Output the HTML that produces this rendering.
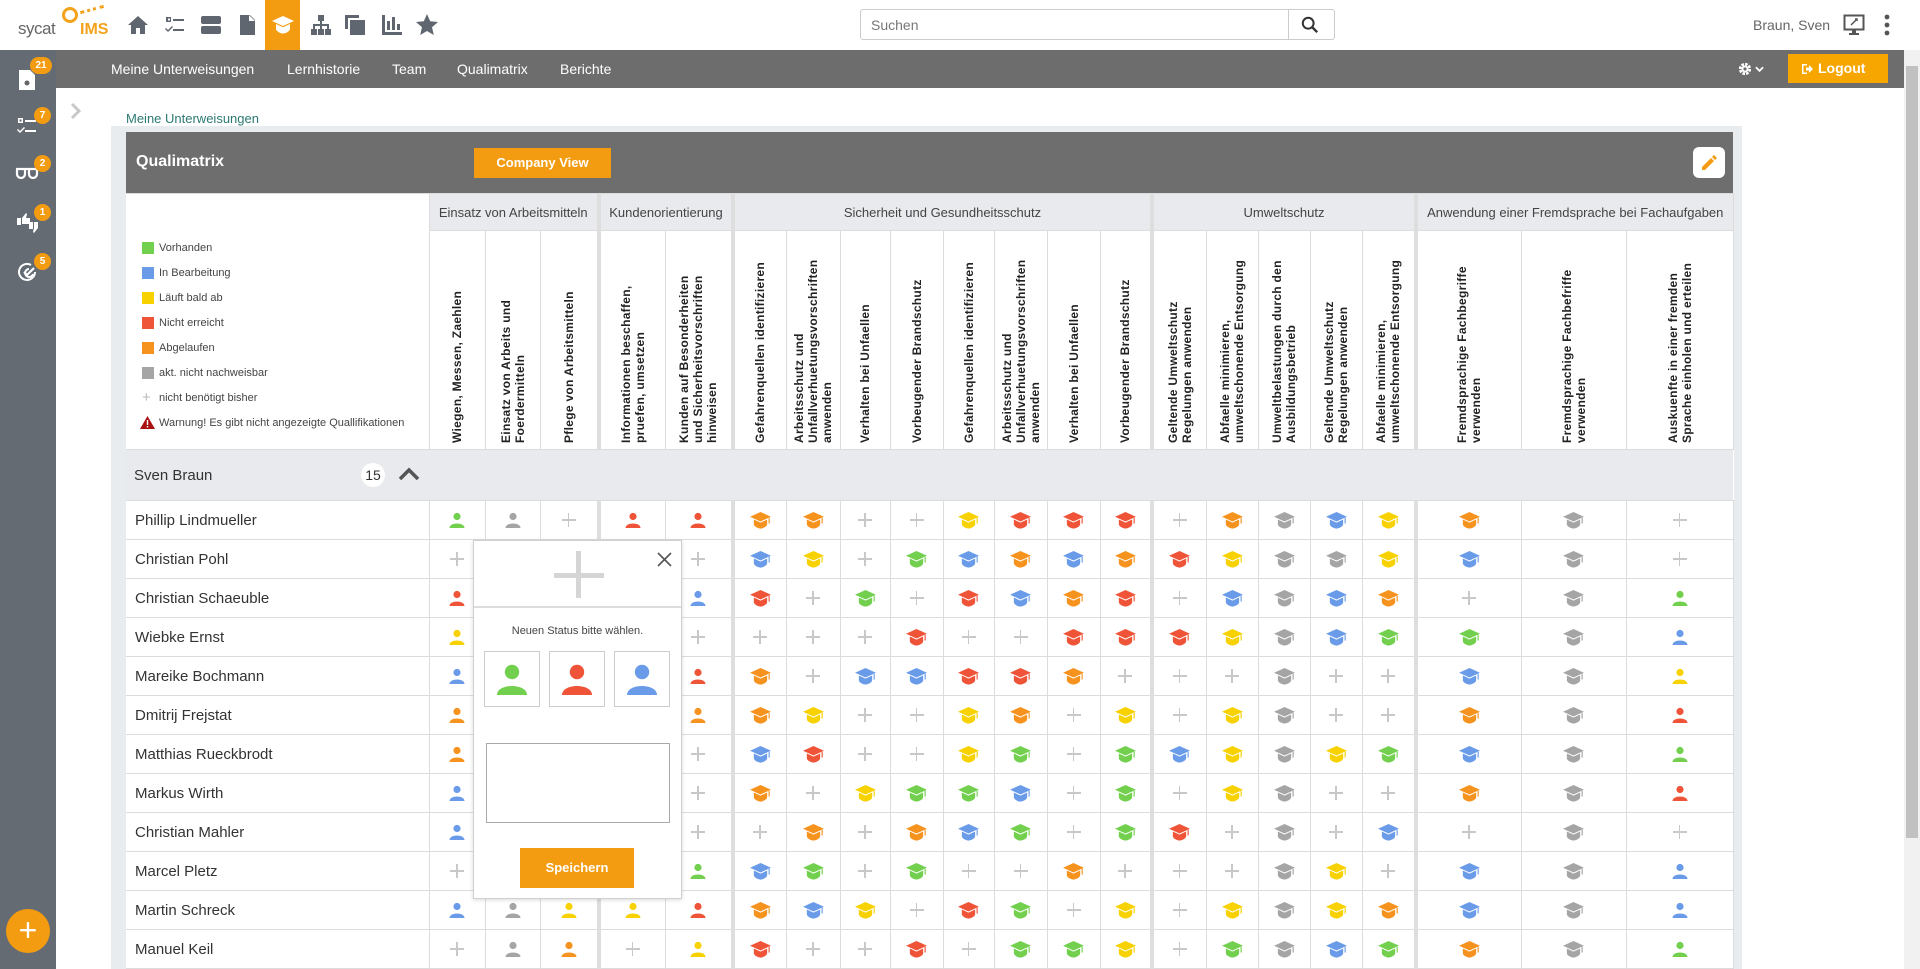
<!DOCTYPE html>
<html><head><meta charset="utf-8">
<style>
*{box-sizing:border-box;margin:0;padding:0}
body{width:1920px;height:969px;overflow:hidden;background:#fff;font-family:"Liberation Sans",sans-serif;position:relative;color:#333}
.top{position:absolute;left:0;top:0;width:1920px;height:50px;background:#fff}
.ti{position:absolute;top:13px;width:24px;height:24px;fill:#5f6670}
.act{position:absolute;left:265px;top:0;width:35px;height:50px;background:#f39c12}
.search{position:absolute;left:860px;top:9px;width:475px;height:31px;border:1px solid #ccc;border-radius:3px;font-size:14px;color:#777;padding:7px 10px}
.search i{position:absolute;left:427px;top:0;width:1px;height:29px;background:#ccc}
.nav{position:absolute;left:0;top:50px;width:1904px;height:38px;background:#6d6d6d}
.nav span{position:absolute;top:11px;color:#fff;font-size:14px}
.side{position:absolute;left:0;top:50px;width:56px;height:919px;background:#646b73}
.badge{position:absolute;background:#f39c12;color:#fff;font-size:10px;border-radius:9px;min-width:17px;height:17px;text-align:center;line-height:17px;font-weight:bold}
.logout{position:absolute;left:1788px;top:54px;width:100px;height:29px;background:#f7a600;color:#fff;font-weight:bold;font-size:14px;padding:6px 0 0 30px}
.scroll{position:absolute;left:1904px;top:50px;width:16px;height:919px;background:#f1f1f1}
.scroll i{position:absolute;left:2px;top:16px;width:12px;height:772px;background:#c1c1c1}
.panel{position:absolute;left:111px;top:126px;width:1631px;height:843px;background:#e9ecef}
.hbar{position:absolute;left:126px;top:132px;width:1607px;height:61px;background:#6e6e6e}
.hbar b{position:absolute;left:10px;top:21px;color:#fff;font-size:16px}
.cv{position:absolute;left:348px;top:16px;width:137px;height:30px;background:#f39c12;color:#fff;font-weight:bold;font-size:13px;text-align:center;line-height:30px}
.ed{position:absolute;left:1567px;top:15px;width:32px;height:31px;background:#fff;border-radius:6px}
table{position:absolute;left:126px;top:193px;border-collapse:collapse;table-layout:fixed;background:#fff}
td,th{border:1px solid #dcdcdc;text-align:center;vertical-align:middle;padding:0}
.g th{height:37px;background:#e8eaed;font-weight:normal;font-size:13px;color:#444}
.rh td{height:219px;vertical-align:bottom}
.rh td div{writing-mode:vertical-rl;transform:rotate(180deg);font-size:12px;font-weight:bold;line-height:14px;height:185px;text-align:left;margin:0 auto 6px;color:#222;letter-spacing:.3px}
.T{border-right:4px solid #dedede}
.sv td{height:51px;background:#e8eaed;border-left:none;border-right:none}
tr.d td{height:39px}
td.n{text-align:left;padding-left:9px;font-size:15px;color:#333;border-left:none}
td.p{position:relative}
td.p::before{content:"";position:absolute;left:50%;top:50%;width:14px;height:1.5px;margin:-1px 0 0 -7px;background:#c8c8c8}
td.p::after{content:"";position:absolute;left:50%;top:50%;width:1.5px;height:14px;margin:-7px 0 0 -1px;background:#c8c8c8}
svg.c{width:23px;height:19px;display:block;margin:0 auto}
svg.u{width:16px;height:16px;display:block;margin:0 auto}
.g1{fill:#72d04e}.b{fill:#6a9be9}.y{fill:#f7d100}.r{fill:#ef5438}.o{fill:#f6921e}.s{fill:#a5a5a5}
.leg{position:absolute;font-size:11px;color:#444}
.leg i{position:absolute;left:-17px;top:0;width:12px;height:12px}
.pop{position:absolute;left:473px;top:540px;width:209px;height:359px;background:#fff;border:1px solid #d0d0d0;box-shadow:0 1px 4px rgba(0,0,0,.15)}
.pop .hd{height:67px;border-bottom:2px solid #ddd;position:relative}
.box{position:absolute;top:110px;width:56px;height:56px;border:1px solid #ccc}
.box svg{width:32px;height:32px;margin:11px auto 0;display:block}
</style></head><body>
<svg width="0" height="0" style="position:absolute">
<defs>
<symbol id="c" viewBox="0 0 24 20"><path d="M12 1L23 6 12 11 1 6Z"/><path d="M5 9v5c0 2 4 4.5 7 4.5s7-2.5 7-4.5V9l-7 3.3z"/><path d="M20.5 7.2h1.2v6h-1.2z"/></symbol>
<symbol id="u" viewBox="0 0 16 16"><circle cx="8" cy="4.5" r="3.6"/><path d="M0.5 16C0.5 10 15.5 10 15.5 16Z"/></symbol>
</defs></svg>

<div class="top">
 <div style="position:absolute;left:18px;top:19px;font-size:17px;color:#666;letter-spacing:-.5px">sycat</div>
 <div style="position:absolute;left:62px;top:7px;width:16px;height:16px;border:3px solid #f3a21c;border-radius:50%"></div>
 <div style="position:absolute;left:80px;top:8px;width:24px;height:3px;border-top:3px dotted #f3a21c;transform:rotate(-15deg)"></div>
 <div style="position:absolute;left:80px;top:21px;font-size:16px;font-weight:bold;color:#f3a21c">IMS</div>
 <svg class="ti" style="left:126px" viewBox="0 0 24 24"><path d="M12 3L2 12h3v9h5v-6h4v6h5v-9h3z"/></svg>
 <svg class="ti" style="left:163px" viewBox="0 0 24 24"><path d="M3 4h5v5H3zm2 1.5v2h2v-2zM10 6h11v2H10zM3 15l2 2 4-4 1 1-5 5-3-3zm7 1h11v2H10z"/></svg>
 <svg class="ti" style="left:199px" viewBox="0 0 24 24"><rect x="2" y="3" width="20" height="8" rx="2"/><rect x="2" y="13" width="20" height="8" rx="2"/></svg>
 <svg class="ti" style="left:235px" viewBox="0 0 24 24"><path d="M5 2h10l5 5v15H5zM14 2v6h6"/></svg>
 <div class="act"></div>
 <svg class="ti" style="left:271px;fill:#fff" viewBox="0 0 24 20"><path d="M12 1L23 6 12 11 1 6Z"/><path d="M5 9v5c0 2 4 4.5 7 4.5s7-2.5 7-4.5V9l-7 3.3z"/></svg>
 <svg class="ti" style="left:309px" viewBox="0 0 24 24"><path d="M9 2h6v6h-2v3h7v5h2v6h-6v-6h2v-3h-5v3h2v6H9v-6h2v-3H6v3h2v6H2v-6h2v-5h7V8H9z"/></svg>
 <svg class="ti" style="left:343px" viewBox="0 0 24 24"><path d="M2 2h14v3H5v11H2zM7 7h15v15H7z"/></svg>
 <svg class="ti" style="left:380px" viewBox="0 0 24 24"><path d="M2 2h3v17h17v3H2zM7 8h3v9H7zm5-4h3v13h-3zm5 7h3v6h-3z"/></svg>
 <svg class="ti" style="left:415px" viewBox="0 0 24 24"><path d="M12 1l3.2 7.3 7.8.7-6 5.3 1.8 7.7L12 18l-6.8 4 1.8-7.7-6-5.3 7.8-.7z"/></svg>
 <div class="search">Suchen<i></i>
  <svg style="position:absolute;left:440px;top:6px;width:18px;height:18px" viewBox="0 0 20 20"><circle cx="8" cy="8" r="6" fill="none" stroke="#333" stroke-width="2.2"/><path d="M12.5 12.5L18 18" stroke="#333" stroke-width="2.6"/></svg></div>
 <div style="position:absolute;left:1753px;top:17px;font-size:14px;color:#666">Braun, Sven</div>
 <svg style="position:absolute;left:1843px;top:14px;width:22px;height:22px" viewBox="0 0 22 22"><rect x="1.5" y="1.5" width="19" height="14" fill="none" stroke="#555" stroke-width="2"/><path d="M9 16h4v3h3v2H6v-2h3z" fill="#555"/><path d="M8 11l5-5M12 5h2v2" stroke="#555" stroke-width="1.5" fill="none"/></svg>
 <svg style="position:absolute;left:1884px;top:14px;width:6px;height:22px" viewBox="0 0 6 22"><circle cx="3" cy="3" r="2.4" fill="#555"/><circle cx="3" cy="11" r="2.4" fill="#555"/><circle cx="3" cy="19" r="2.4" fill="#555"/></svg>
</div>

<div class="nav">
 <span style="left:111px">Meine Unterweisungen</span>
 <span style="left:287px">Lernhistorie</span>
 <span style="left:392px">Team</span>
 <span style="left:457px">Qualimatrix</span>
 <span style="left:560px">Berichte</span>
 <svg style="position:absolute;left:1738px;top:12px;width:14px;height:14px" viewBox="0 0 16 16"><circle cx="8" cy="8" r="5.5" fill="none" stroke="#fff" stroke-width="3" stroke-dasharray="3 1.3"/><circle cx="8" cy="8" r="4" fill="#fff"/><circle cx="8" cy="8" r="1.8" fill="#6d6d6d"/></svg>
 <svg style="position:absolute;left:1755px;top:15px;width:9px;height:8px" viewBox="0 0 10 8"><path d="M1 2l4 4 4-4" stroke="#fff" stroke-width="2" fill="none"/></svg>
</div>
<div class="logout"><svg style="position:absolute;left:13px;top:9px;width:12px;height:12px" viewBox="0 0 12 12"><path d="M1 1h5v1.5H2.5v7H6V11H1z" fill="#fff"/><path d="M5 4.5h3V2l4 4-4 4V7.5H5z" fill="#fff"/></svg>Logout</div>
<div class="scroll"><i></i></div>

<div class="side">
 <svg style="position:absolute;left:19px;top:20px;width:16px;height:20px" viewBox="0 0 16 20"><path d="M0 0h11l5 5v15H0z" fill="#fff"/><circle cx="8" cy="13" r="2.5" fill="#666"/></svg>
 <div class="badge" style="left:30px;top:7px;width:22px">21</div>
 <svg style="position:absolute;left:17px;top:67px;width:22px;height:18px" viewBox="0 0 22 18"><path d="M1 1h5v5H1zm1.5 1.5v2h2v-2zM8 3h11v2H8zM1 12l2 2 4-4 1 1-5 5-3-3zm7 1h11v2H8z" fill="#fff"/></svg>
 <div class="badge" style="left:34px;top:57px">7</div>
 <svg style="position:absolute;left:15px;top:117px;width:24px;height:12px" viewBox="0 0 24 12"><path d="M1 2h22M2 2v5a4 4 0 008 0V3m4 0v4a4 4 0 008 0V2" stroke="#fff" stroke-width="2.2" fill="none"/></svg>
 <div class="badge" style="left:34px;top:105px">2</div>
 <svg style="position:absolute;left:16px;top:162px;width:24px;height:22px" viewBox="0 0 24 22"><path d="M1 6h4v7H1zM6 6l4-5 1 1-1 4h4v6H6zM13 10h4v7h-4zM18 10h4v6l-4 5-1-1 1-4z" fill="#fff"/></svg>
 <div class="badge" style="left:34px;top:154px">1</div>
 <svg style="position:absolute;left:17px;top:212px;width:22px;height:20px" viewBox="0 0 22 20"><path d="M14 3A8 8 0 1018 10" stroke="#fff" stroke-width="2" fill="none"/><path d="M12 7a4 4 0 104 5" stroke="#fff" stroke-width="2" fill="none"/><path d="M7 10l3 3 7-7" stroke="#fff" stroke-width="2.2" fill="none"/></svg>
 <div class="badge" style="left:34px;top:203px">5</div>
 <div style="position:absolute;left:6px;top:859px;width:44px;height:44px;border-radius:50%;background:#f39c12;color:#fff;font-size:32px;text-align:center;line-height:42px">+</div>
</div>

<svg style="position:absolute;left:70px;top:102px;width:12px;height:18px" viewBox="0 0 12 18"><path d="M2 2l7 7-7 7" stroke="#c8c8c8" stroke-width="3" fill="none"/></svg>
<div style="position:absolute;left:126px;top:111px;font-size:13px;color:#2c7a72">Meine Unterweisungen</div>

<div class="panel"></div>
<div class="hbar"><b>Qualimatrix</b><div class="cv">Company View</div>
 <div class="ed"><svg style="width:18px;height:18px;margin:7px" viewBox="0 0 18 18"><path d="M2 13l9-9 3 3-9 9H2zM12 3l2-2 3 3-2 2z" fill="#f39c12"/></svg></div></div>

<table>
<colgroup><col style="width:303px"><col style="width:56px"><col style="width:55px"><col style="width:59px"><col style="width:66px"><col style="width:68px"><col style="width:53px"><col style="width:54px"><col style="width:50px"><col style="width:53px"><col style="width:51px"><col style="width:53px"><col style="width:53px"><col style="width:52px"><col style="width:54px"><col style="width:52px"><col style="width:52px"><col style="width:52px"><col style="width:54px"><col style="width:105px"><col style="width:105px"><col style="width:107px"></colgroup>
<tr class="g"><th rowspan="2" style="background:#fff;border-left:none;border-bottom:none"></th><th colspan="3" class="T">Einsatz von Arbeitsmitteln</th><th colspan="2" class="T">Kundenorientierung</th><th colspan="8" class="T">Sicherheit und Gesundheitsschutz</th><th colspan="5" class="T">Umweltschutz</th><th colspan="3">Anwendung einer Fremdsprache bei Fachaufgaben</th></tr>
<tr class="rh">
<td><div>Wiegen, Messen, Zaehlen</div></td>
<td><div>Einsatz von Arbeits und Foerdermitteln</div></td>
<td class="T"><div>Pflege von Arbeitsmitteln</div></td>
<td><div>Informationen beschaffen, pruefen, umsetzen</div></td>
<td class="T"><div>Kunden auf Besonderheiten und Sicherheitsvorschriften hinweisen</div></td>
<td><div>Gefahrenquellen identifizieren</div></td>
<td><div>Arbeitsschutz und Unfallverhuetungsvorschriften anwenden</div></td>
<td><div>Verhalten bei Unfaellen</div></td>
<td><div>Vorbeugender Brandschutz</div></td>
<td><div>Gefahrenquellen identifizieren</div></td>
<td><div>Arbeitsschutz und Unfallverhuetungsvorschriften anwenden</div></td>
<td><div>Verhalten bei Unfaellen</div></td>
<td class="T"><div>Vorbeugender Brandschutz</div></td>
<td><div>Geltende Umweltschutz Regelungen anwenden</div></td>
<td><div>Abfaelle minimieren, umweltschonende Entsorgung</div></td>
<td><div>Umweltbelastungen durch den Ausbildungsbetrieb</div></td>
<td><div>Geltende Umweltschutz Regelungen anwenden</div></td>
<td class="T"><div>Abfaelle minimieren, umweltschonende Entsorgung</div></td>
<td><div>Fremdsprachige Fachbegriffe verwenden</div></td>
<td><div>Fremdsprachige Fachbefriffe verwenden</div></td>
<td><div>Auskuenfte in einer fremden Sprache einholen und erteilen</div></td>
</tr>
<tr class="sv"><td style="text-align:left;padding-left:8px;font-size:15px;position:relative">Sven Braun<span style="position:absolute;left:235px;top:13px;width:24px;height:24px;border-radius:50%;background:#fff;font-size:14px;text-align:center;line-height:24px">15</span><svg style="position:absolute;left:272px;top:17px;width:22px;height:14px" viewBox="0 0 22 14"><path d="M2 12L11 3l9 9" stroke="#555" stroke-width="3.5" fill="none"/></svg></td><td colspan="21"></td></tr>
</table>

<div class="leg" style="left:159px;top:242px"><i style="background:#72d04e"></i>Vorhanden</div>
<div class="leg" style="left:159px;top:267px"><i style="background:#6a9be9"></i>In Bearbeitung</div>
<div class="leg" style="left:159px;top:292px"><i style="background:#f7d100"></i>Läuft bald ab</div>
<div class="leg" style="left:159px;top:317px"><i style="background:#ef5438"></i>Nicht erreicht</div>
<div class="leg" style="left:159px;top:342px"><i style="background:#f6921e"></i>Abgelaufen</div>
<div class="leg" style="left:159px;top:367px"><i style="background:#a5a5a5"></i>akt. nicht nachweisbar</div>
<div class="leg" style="left:159px;top:392px"><span style="position:absolute;left:-17px;top:-3px;color:#bbb;font-size:15px">+</span>nicht benötigt bisher</div>
<div class="leg" style="left:159px;top:417px"><svg style="position:absolute;left:-19px;top:-1px;width:15px;height:13px" viewBox="0 0 15 13"><path d="M7.5 0L15 13H0z" fill="#a11"/><path d="M6.8 4h1.4v5H6.8zM6.8 10h1.4v1.5H6.8z" fill="#fff"/></svg>Warnung! Es gibt nicht angezeigte Quallifikationen</div>

<table style="top:500px">
<colgroup><col style="width:303px"><col style="width:56px"><col style="width:55px"><col style="width:59px"><col style="width:66px"><col style="width:68px"><col style="width:53px"><col style="width:54px"><col style="width:50px"><col style="width:53px"><col style="width:51px"><col style="width:53px"><col style="width:53px"><col style="width:52px"><col style="width:54px"><col style="width:52px"><col style="width:52px"><col style="width:52px"><col style="width:54px"><col style="width:105px"><col style="width:105px"><col style="width:107px"></colgroup>
<tr class="d"><td class="n">Phillip Lindmueller</td><td><svg class="u g1"><use href="#u"/></svg></td><td><svg class="u s"><use href="#u"/></svg></td><td class="p T"></td><td><svg class="u r"><use href="#u"/></svg></td><td class="T"><svg class="u r"><use href="#u"/></svg></td><td><svg class="c o"><use href="#c"/></svg></td><td><svg class="c o"><use href="#c"/></svg></td><td class="p"></td><td class="p"></td><td><svg class="c y"><use href="#c"/></svg></td><td><svg class="c r"><use href="#c"/></svg></td><td><svg class="c r"><use href="#c"/></svg></td><td class="T"><svg class="c r"><use href="#c"/></svg></td><td class="p"></td><td><svg class="c o"><use href="#c"/></svg></td><td><svg class="c s"><use href="#c"/></svg></td><td><svg class="c b"><use href="#c"/></svg></td><td class="T"><svg class="c y"><use href="#c"/></svg></td><td><svg class="c o"><use href="#c"/></svg></td><td><svg class="c s"><use href="#c"/></svg></td><td class="p"></td></tr>
<tr class="d"><td class="n">Christian Pohl</td><td class="p"></td><td></td><td class="T"></td><td></td><td class="p T"></td><td><svg class="c b"><use href="#c"/></svg></td><td><svg class="c y"><use href="#c"/></svg></td><td class="p"></td><td><svg class="c g1"><use href="#c"/></svg></td><td><svg class="c b"><use href="#c"/></svg></td><td><svg class="c o"><use href="#c"/></svg></td><td><svg class="c b"><use href="#c"/></svg></td><td class="T"><svg class="c o"><use href="#c"/></svg></td><td><svg class="c r"><use href="#c"/></svg></td><td><svg class="c y"><use href="#c"/></svg></td><td><svg class="c s"><use href="#c"/></svg></td><td><svg class="c s"><use href="#c"/></svg></td><td class="T"><svg class="c y"><use href="#c"/></svg></td><td><svg class="c b"><use href="#c"/></svg></td><td><svg class="c s"><use href="#c"/></svg></td><td class="p"></td></tr>
<tr class="d"><td class="n">Christian Schaeuble</td><td><svg class="u r"><use href="#u"/></svg></td><td></td><td class="T"></td><td></td><td class="T"><svg class="u b"><use href="#u"/></svg></td><td><svg class="c r"><use href="#c"/></svg></td><td class="p"></td><td><svg class="c g1"><use href="#c"/></svg></td><td class="p"></td><td><svg class="c r"><use href="#c"/></svg></td><td><svg class="c b"><use href="#c"/></svg></td><td><svg class="c o"><use href="#c"/></svg></td><td class="T"><svg class="c r"><use href="#c"/></svg></td><td class="p"></td><td><svg class="c b"><use href="#c"/></svg></td><td><svg class="c s"><use href="#c"/></svg></td><td><svg class="c b"><use href="#c"/></svg></td><td class="T"><svg class="c o"><use href="#c"/></svg></td><td class="p"></td><td><svg class="c s"><use href="#c"/></svg></td><td><svg class="u g1"><use href="#u"/></svg></td></tr>
<tr class="d"><td class="n">Wiebke Ernst</td><td><svg class="u y"><use href="#u"/></svg></td><td></td><td class="T"></td><td></td><td class="p T"></td><td class="p"></td><td class="p"></td><td class="p"></td><td><svg class="c r"><use href="#c"/></svg></td><td class="p"></td><td class="p"></td><td><svg class="c r"><use href="#c"/></svg></td><td class="T"><svg class="c r"><use href="#c"/></svg></td><td><svg class="c r"><use href="#c"/></svg></td><td><svg class="c y"><use href="#c"/></svg></td><td><svg class="c s"><use href="#c"/></svg></td><td><svg class="c b"><use href="#c"/></svg></td><td class="T"><svg class="c g1"><use href="#c"/></svg></td><td><svg class="c g1"><use href="#c"/></svg></td><td><svg class="c s"><use href="#c"/></svg></td><td><svg class="u b"><use href="#u"/></svg></td></tr>
<tr class="d"><td class="n">Mareike Bochmann</td><td><svg class="u b"><use href="#u"/></svg></td><td></td><td class="T"></td><td></td><td class="T"><svg class="u r"><use href="#u"/></svg></td><td><svg class="c o"><use href="#c"/></svg></td><td class="p"></td><td><svg class="c b"><use href="#c"/></svg></td><td><svg class="c b"><use href="#c"/></svg></td><td><svg class="c r"><use href="#c"/></svg></td><td><svg class="c r"><use href="#c"/></svg></td><td><svg class="c o"><use href="#c"/></svg></td><td class="p T"></td><td class="p"></td><td class="p"></td><td><svg class="c s"><use href="#c"/></svg></td><td class="p"></td><td class="p T"></td><td><svg class="c b"><use href="#c"/></svg></td><td><svg class="c s"><use href="#c"/></svg></td><td><svg class="u y"><use href="#u"/></svg></td></tr>
<tr class="d"><td class="n">Dmitrij Frejstat</td><td><svg class="u o"><use href="#u"/></svg></td><td></td><td class="T"></td><td></td><td class="T"><svg class="u o"><use href="#u"/></svg></td><td><svg class="c o"><use href="#c"/></svg></td><td><svg class="c y"><use href="#c"/></svg></td><td class="p"></td><td class="p"></td><td><svg class="c y"><use href="#c"/></svg></td><td><svg class="c o"><use href="#c"/></svg></td><td class="p"></td><td class="T"><svg class="c y"><use href="#c"/></svg></td><td class="p"></td><td><svg class="c y"><use href="#c"/></svg></td><td><svg class="c s"><use href="#c"/></svg></td><td class="p"></td><td class="p T"></td><td><svg class="c o"><use href="#c"/></svg></td><td><svg class="c s"><use href="#c"/></svg></td><td><svg class="u r"><use href="#u"/></svg></td></tr>
<tr class="d"><td class="n">Matthias Rueckbrodt</td><td><svg class="u o"><use href="#u"/></svg></td><td></td><td class="T"></td><td></td><td class="p T"></td><td><svg class="c b"><use href="#c"/></svg></td><td><svg class="c r"><use href="#c"/></svg></td><td class="p"></td><td class="p"></td><td><svg class="c y"><use href="#c"/></svg></td><td><svg class="c g1"><use href="#c"/></svg></td><td class="p"></td><td class="T"><svg class="c g1"><use href="#c"/></svg></td><td><svg class="c b"><use href="#c"/></svg></td><td><svg class="c y"><use href="#c"/></svg></td><td><svg class="c s"><use href="#c"/></svg></td><td><svg class="c y"><use href="#c"/></svg></td><td class="T"><svg class="c g1"><use href="#c"/></svg></td><td><svg class="c b"><use href="#c"/></svg></td><td><svg class="c s"><use href="#c"/></svg></td><td><svg class="u g1"><use href="#u"/></svg></td></tr>
<tr class="d"><td class="n">Markus Wirth</td><td><svg class="u b"><use href="#u"/></svg></td><td></td><td class="T"></td><td></td><td class="p T"></td><td><svg class="c o"><use href="#c"/></svg></td><td class="p"></td><td><svg class="c y"><use href="#c"/></svg></td><td><svg class="c g1"><use href="#c"/></svg></td><td><svg class="c g1"><use href="#c"/></svg></td><td><svg class="c b"><use href="#c"/></svg></td><td class="p"></td><td class="T"><svg class="c g1"><use href="#c"/></svg></td><td class="p"></td><td><svg class="c y"><use href="#c"/></svg></td><td><svg class="c s"><use href="#c"/></svg></td><td class="p"></td><td class="p T"></td><td><svg class="c o"><use href="#c"/></svg></td><td><svg class="c s"><use href="#c"/></svg></td><td><svg class="u r"><use href="#u"/></svg></td></tr>
<tr class="d"><td class="n">Christian Mahler</td><td><svg class="u b"><use href="#u"/></svg></td><td></td><td class="T"></td><td></td><td class="p T"></td><td class="p"></td><td><svg class="c o"><use href="#c"/></svg></td><td class="p"></td><td><svg class="c o"><use href="#c"/></svg></td><td><svg class="c b"><use href="#c"/></svg></td><td><svg class="c g1"><use href="#c"/></svg></td><td class="p"></td><td class="T"><svg class="c g1"><use href="#c"/></svg></td><td><svg class="c r"><use href="#c"/></svg></td><td class="p"></td><td><svg class="c s"><use href="#c"/></svg></td><td class="p"></td><td class="T"><svg class="c b"><use href="#c"/></svg></td><td class="p"></td><td><svg class="c s"><use href="#c"/></svg></td><td class="p"></td></tr>
<tr class="d"><td class="n">Marcel Pletz</td><td class="p"></td><td></td><td class="T"></td><td></td><td class="T"><svg class="u g1"><use href="#u"/></svg></td><td><svg class="c b"><use href="#c"/></svg></td><td><svg class="c g1"><use href="#c"/></svg></td><td class="p"></td><td><svg class="c g1"><use href="#c"/></svg></td><td class="p"></td><td class="p"></td><td><svg class="c o"><use href="#c"/></svg></td><td class="p T"></td><td class="p"></td><td class="p"></td><td><svg class="c s"><use href="#c"/></svg></td><td><svg class="c y"><use href="#c"/></svg></td><td class="p T"></td><td><svg class="c b"><use href="#c"/></svg></td><td><svg class="c s"><use href="#c"/></svg></td><td><svg class="u b"><use href="#u"/></svg></td></tr>
<tr class="d"><td class="n">Martin Schreck</td><td><svg class="u b"><use href="#u"/></svg></td><td><svg class="u s"><use href="#u"/></svg></td><td class="T"><svg class="u y"><use href="#u"/></svg></td><td><svg class="u y"><use href="#u"/></svg></td><td class="T"><svg class="u r"><use href="#u"/></svg></td><td><svg class="c o"><use href="#c"/></svg></td><td><svg class="c b"><use href="#c"/></svg></td><td><svg class="c y"><use href="#c"/></svg></td><td class="p"></td><td><svg class="c r"><use href="#c"/></svg></td><td><svg class="c g1"><use href="#c"/></svg></td><td class="p"></td><td class="T"><svg class="c y"><use href="#c"/></svg></td><td class="p"></td><td><svg class="c y"><use href="#c"/></svg></td><td><svg class="c s"><use href="#c"/></svg></td><td><svg class="c y"><use href="#c"/></svg></td><td class="T"><svg class="c o"><use href="#c"/></svg></td><td><svg class="c b"><use href="#c"/></svg></td><td><svg class="c s"><use href="#c"/></svg></td><td><svg class="u b"><use href="#u"/></svg></td></tr>
<tr class="d"><td class="n">Manuel Keil</td><td class="p"></td><td><svg class="u s"><use href="#u"/></svg></td><td class="T"><svg class="u o"><use href="#u"/></svg></td><td class="p"></td><td class="T"><svg class="u y"><use href="#u"/></svg></td><td><svg class="c r"><use href="#c"/></svg></td><td class="p"></td><td class="p"></td><td><svg class="c r"><use href="#c"/></svg></td><td class="p"></td><td><svg class="c g1"><use href="#c"/></svg></td><td><svg class="c g1"><use href="#c"/></svg></td><td class="T"><svg class="c y"><use href="#c"/></svg></td><td class="p"></td><td><svg class="c g1"><use href="#c"/></svg></td><td><svg class="c s"><use href="#c"/></svg></td><td><svg class="c b"><use href="#c"/></svg></td><td class="T"><svg class="c g1"><use href="#c"/></svg></td><td><svg class="c o"><use href="#c"/></svg></td><td><svg class="c s"><use href="#c"/></svg></td><td><svg class="u g1"><use href="#u"/></svg></td></tr>
</table>

<div class="pop">
 <div class="hd">
  <div style="position:absolute;left:80px;top:32px;width:50px;height:5px;background:#d5d5d5"></div>
  <div style="position:absolute;left:102px;top:10px;width:5px;height:47px;background:#d5d5d5"></div>
  <svg style="position:absolute;left:183px;top:11px;width:15px;height:15px" viewBox="0 0 15 15"><path d="M1 1l13 13M14 1L1 14" stroke="#555" stroke-width="1.6"/></svg>
 </div>
 <div style="position:absolute;left:0;top:84px;width:207px;text-align:center;font-size:11px;color:#444">Neuen Status bitte wählen.</div>
 <div class="box" style="left:10px"><svg class="g1"><use href="#u"/></svg></div>
 <div class="box" style="left:75px"><svg class="r"><use href="#u"/></svg></div>
 <div class="box" style="left:140px"><svg class="b"><use href="#u"/></svg></div>
 <div style="position:absolute;left:12px;top:202px;width:184px;height:80px;border:1px solid #aaa"></div>
 <div style="position:absolute;left:46px;top:307px;width:114px;height:40px;background:#f39c12;color:#fff;font-weight:bold;font-size:13px;text-align:center;line-height:40px">Speichern</div>
</div>
</body></html>
